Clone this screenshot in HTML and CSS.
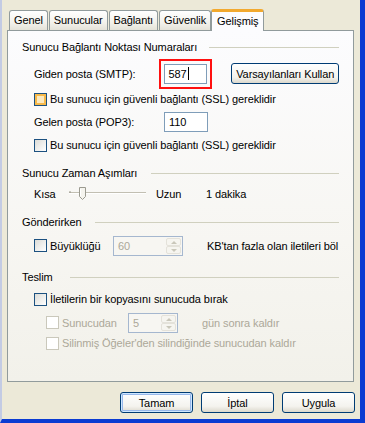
FILE: index.html
```html
<!DOCTYPE html>
<html>
    <head>
        <title>Hesap Özellikleri - Gelişmiş</title>
        <meta charset="UTF-8">
        <link rel="stylesheet" href="styles.css">
    </head>
    <body>
        <div class="window">
            <div class="tabs">
                <div class="tab">Genel</div>
                <div class="tab">Sunucular</div>
                <div class="tab">Bağlantı</div>
                <div class="tab">Güvenlik</div>
                <div class="tab active">Gelişmiş</div>
            </div>
            <div class="panel">
                <div class="group g1">Sunucu Bağlantı Noktası Numaraları</div>
                <div class="row smtp">
                    <span class="label">Giden posta (SMTP):</span>
                    <span class="field marked">587<span class="caret"></span></span>
                    <span class="btn wide">Varsayılanları Kullan</span>
                </div>
                <div class="row check cb1"><span class="box hot"></span>Bu sunucu için güvenli bağlantı (SSL) gereklidir</div>
                <div class="row pop">
                    <span class="label">Gelen posta (POP3):</span>
                    <span class="field">110</span>
                </div>
                <div class="row check cb2"><span class="box"></span>Bu sunucu için güvenli bağlantı (SSL) gereklidir</div>

                <div class="group g2">Sunucu Zaman Aşımları</div>
                <div class="row slider-row">
                    <span class="short">Kısa</span>
                    <svg class="slider" width="80" height="20" viewBox="0 0 80 20">
                        <line x1="2" y1="8.5" x2="79" y2="8.5" stroke="#c2bfb2" stroke-width="1"/>
                        <line x1="2" y1="9.5" x2="79" y2="9.5" stroke="#ffffff" stroke-width="1"/>
                        <line x1="2" y1="8" x2="4" y2="8" stroke="#9a988c"/>
                        <path d="M12.5 3.5 h6 v9 l-3 3 l-3 -3 z" fill="#f5f4ee" stroke="#9b9a90"/>
                        <line x1="13.5" y1="5" x2="13.5" y2="12" stroke="#ffffff"/>
                    </svg>
                    <span class="long">Uzun</span>
                    <span>1 dakika</span>
                </div>

                <div class="group g3">Gönderirken</div>
                <div class="row check size-row">
                    <span class="box"></span><span class="size-label">Büyüklüğü</span>
                    <span class="spin big"><span class="spin-val">60</span><span class="spin-btns"><span class="up"></span><span class="down"></span></span></span>
                    <span class="kb">KB'tan fazla olan iletileri böl</span>
                </div>

                <div class="group g4">Teslim</div>
                <div class="row check cb3"><span class="box"></span>İletilerin bir kopyasını sunucuda bırak</div>
                <div class="row check sub off days-row">
                    <span class="box"></span><span class="days-label">Sunucudan</span>
                    <span class="spin small"><span class="spin-val">5</span><span class="spin-btns"><span class="up"></span><span class="down"></span></span></span>
                    <span class="days">gün sonra kaldır</span>
                </div>
                <div class="row check sub off cb5"><span class="box"></span>Silinmiş Öğeler'den silindiğinde sunucudan kaldır</div>
            </div>
            <div class="buttons">
                <span class="btn default">Tamam</span>
                <span class="btn">İptal</span>
                <span class="btn">Uygula</span>
            </div>
        </div>
    </body>
</html>
```

FILE: styles.css
```css
body{
    margin: 0;
    background: #ECE9D8;
    font-family: "Liberation Sans", Arial, sans-serif;
    font-size: 11px;
    letter-spacing: -0.1px;
    color: #000;
    white-space: nowrap;
}
.window{
    box-sizing: border-box;
    width: 365px;
    height: 423px;
    background: #ECE9D8;
    border-left: 2px solid #c3cbe4;
    border-right: 5px solid #0a3bd2;
    border-bottom: 4px solid #0a3bd2;
    overflow: hidden;
}

/* tabs */
.tabs{
    display: flex;
    align-items: flex-end;
    margin-left: 7px;
    margin-top: 9px;
    height: 22px;
    margin-bottom: -1px;
}
.tab{
    box-sizing: border-box;
    height: 20px;
    padding: 0 4px;
    margin-right: 1px;
    line-height: 19px;
    border: 1px solid #919B9C;
    border-bottom: none;
    border-radius: 3px 3px 0 0;
    background: linear-gradient(#ffffff, #f3f2ec 60%, #e4e2d8);
    margin-bottom: 1px;
}
.tab.active{
    height: 22px;
    margin-bottom: 0;
    margin-left: -1px;
    line-height: 19px;
    padding: 0 5px;
    border-top: 3px solid #F2A92E;
    background: #fcfcfe;
    position: relative;
    z-index: 1;
}

/* tab page */
.panel{
    box-sizing: border-box;
    margin-left: 5px;
    width: 347px;
    height: 352px;
    border: 1px solid #919B9C;
    background: linear-gradient(#fcfcfe, #f7f6f2 60%, #f2f1ea);
    padding-left: 14px;
    padding-right: 14px;
}
.group{
    display: flex;
    align-items: center;
    height: 16px;
    line-height: 16px;
}
.group::after{
    content: "";
    flex: 1;
    height: 1px;
    background: #D0D0BF;
    margin-left: 8px;
}
.g1{ margin-top: 8px; }
.g1::after{ margin-left: 12px; }
.g2{ margin-top: 12px; }
.g2::after{ margin-left: 14px; }
.g3{ margin-top: 10px; }
.g3::after{ margin-left: 14px; }
.g4{ margin-top: 13px; }
.g4::after{ margin-left: 17px; }

.row{
    display: flex;
    align-items: center;
    padding-left: 12px;
}
.label{
    width: 130px;
}
.field{
    box-sizing: border-box;
    display: flex;
    align-items: center;
    width: 44px;
    height: 20px;
    padding-left: 4px;
    border: 1px solid #7F9DB9;
    background: #fff;
}
.marked{
    outline: 2px solid #ff1010;
    outline-offset: 3px;
}
.caret{
    width: 1px;
    height: 13px;
    background: #000;
    margin-left: 1px;
}
.smtp{
    height: 21px;
    margin-top: 8px;
}
.smtp .btn{
    margin-left: 24px;
}
.pop{
    height: 21px;
    margin-top: 4px;
}

/* check boxes */
.check{
    height: 16px;
}
.box{
    box-sizing: border-box;
    flex: none;
    width: 13px;
    height: 13px;
    margin-right: 3px;
    border: 1px solid #1C5180;
    background: linear-gradient(135deg, #dcdcd7, #ffffff);
}
.box.hot{
    background: #fbe9bf;
    box-shadow: inset 0 0 0 2px #f7b94a;
}
.sub{
    padding-left: 24px;
}
.off{
    color: #ACA899;
}
.off .box{
    border-color: #CAC8BB;
    background: #ffffff;
}
.cb1{ margin-top: 7px; }
.cb2{ margin-top: 5px; }
.cb3{ margin-top: 6px; }
.cb5{ margin-top: 2px; }

/* slider */
.slider-row{
    height: 20px;
    margin-top: 3px;
}
.short{
    width: 33px;
}
.slider{
    display: block;
}
.long{
    margin-left: 9px;
    width: 50px;
}

/* spin boxes */
.size-row{
    height: 21px;
    margin-top: 5px;
}
.size-label{
    width: 63px;
}
.spin{
    box-sizing: border-box;
    display: flex;
    flex: none;
    height: 20px;
    border: 1px solid #a5b7cf;
    background: #f7f6f2;
    color: #ACA899;
}
.spin.big{
    width: 70px;
}
.spin.small{
    width: 50px;
}
.spin-val{
    flex: 1;
    padding-left: 4px;
    line-height: 18px;
}
.spin-btns{
    display: flex;
    flex-direction: column;
    width: 15px;
    margin: 1px;
}
.spin-btns span{
    flex: 1;
    border: 1px solid #e4e2da;
    border-radius: 2px;
    background: #f6f5f0;
    position: relative;
}
.spin-btns .up::after,
.spin-btns .down::after{
    content: "";
    position: absolute;
    left: 4px;
    top: 2px;
    border-left: 3px solid transparent;
    border-right: 3px solid transparent;
}
.spin-btns .up::after{
    border-bottom: 3px solid #c9c7ba;
}
.spin-btns .down::after{
    border-top: 3px solid #c9c7ba;
}
.kb{
    margin-left: 24px;
}
.days-row{
    height: 21px;
    margin-top: 5px;
}
.days-label{
    width: 66px;
}
.days{
    margin-left: 24px;
}

/* push buttons */
.btn{
    box-sizing: border-box;
    display: flex;
    align-items: center;
    justify-content: center;
    height: 21px;
    border: 1px solid #003C74;
    border-radius: 3px;
    background: linear-gradient(#ffffff, #f4f3ee 70%, #dcd8cc);
}
.btn.wide{
    width: 108px;
}
.buttons{
    display: flex;
    justify-content: flex-end;
    gap: 8px;
    margin-top: 10px;
    padding-right: 5px;
}
.buttons .btn{
    width: 73px;
}
.btn.default{
    box-shadow: inset 0 0 0 1px #cee7ff, inset 0 0 0 2px #98b8ea;
}
```
